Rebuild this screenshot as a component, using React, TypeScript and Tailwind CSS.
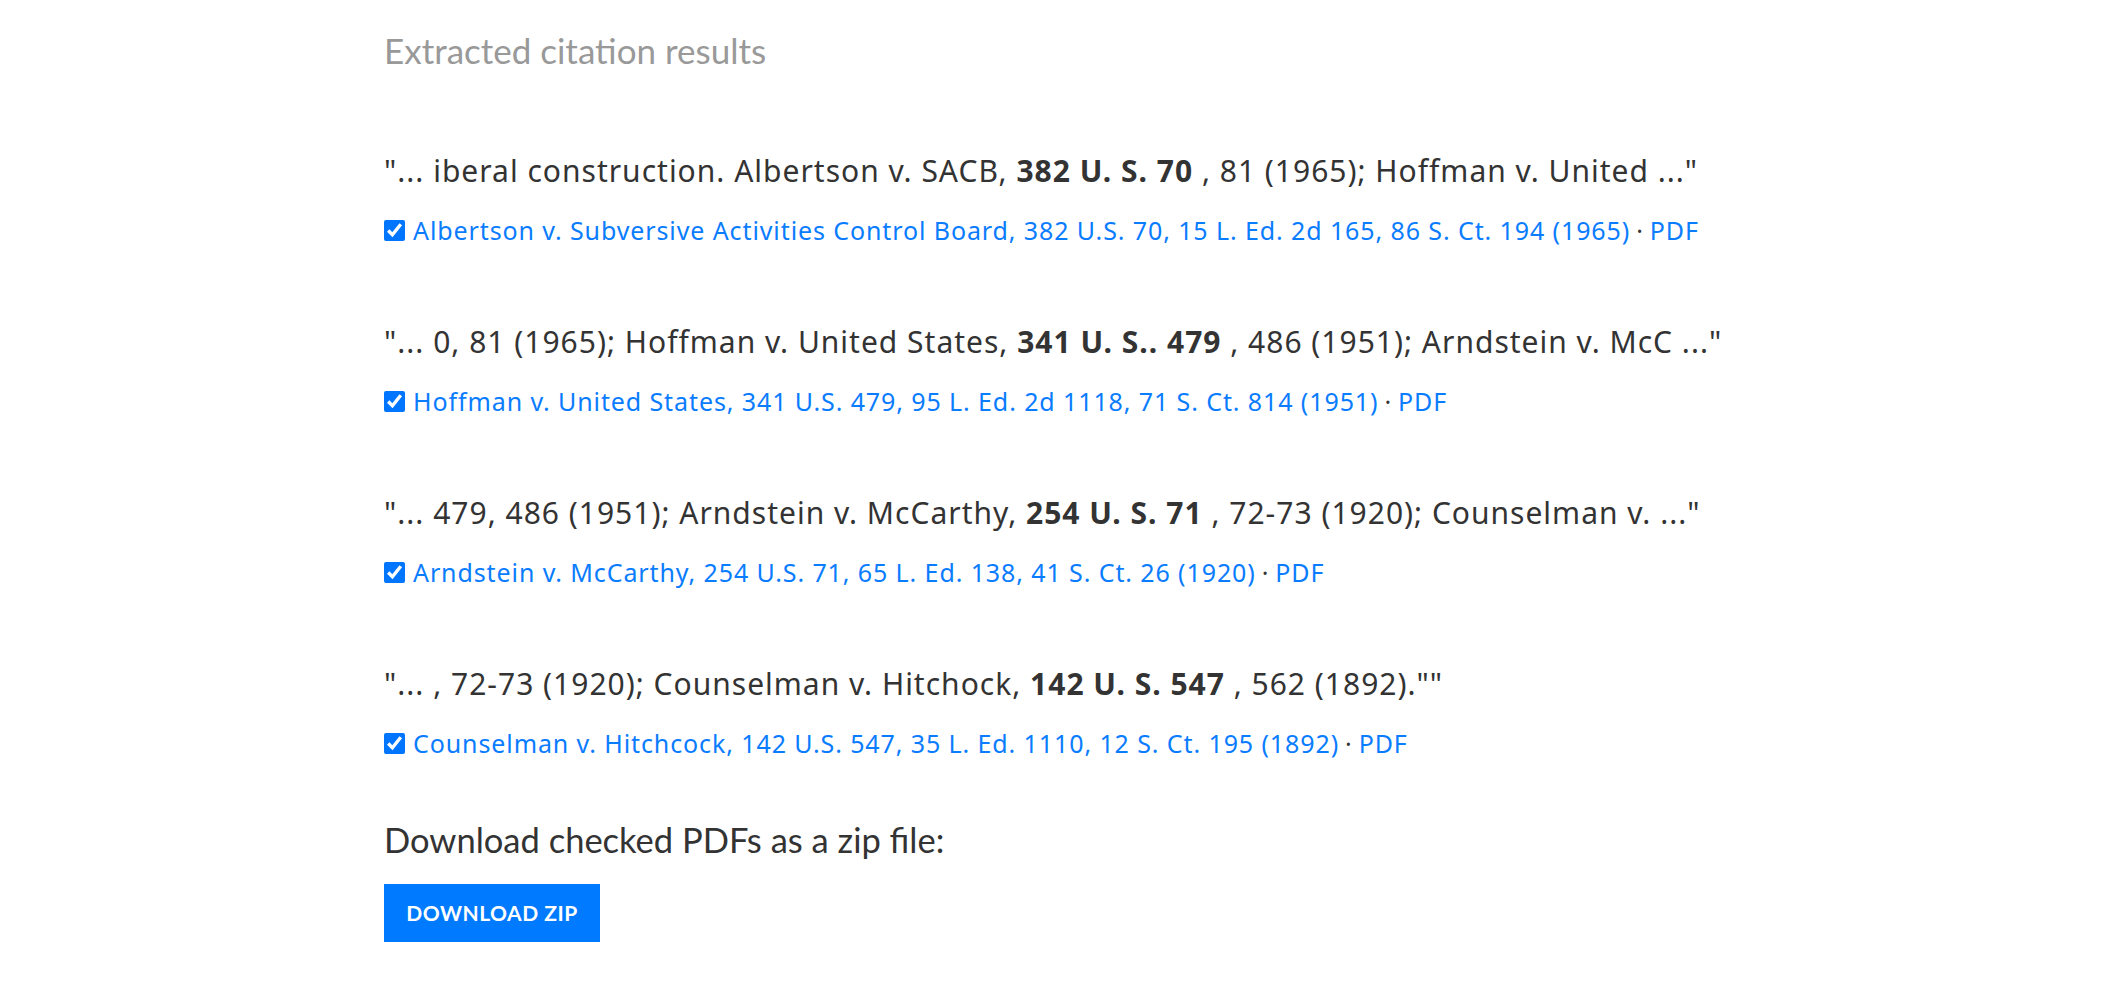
import React from 'react';

type Result = {
  before: string;
  cite: string;
  after: string;
  link: string;
};

const results: Result[] = [
  {
    before: '"... iberal construction. Albertson v. SACB, ',
    cite: '382 U. S. 70',
    after: ' , 81 (1965); Hoffman v. United ..."',
    link: 'Albertson v. Subversive Activities Control Board, 382 U.S. 70, 15 L. Ed. 2d 165, 86 S. Ct. 194 (1965)',
  },
  {
    before: '"... 0, 81 (1965); Hoffman v. United States, ',
    cite: '341 U. S.. 479',
    after: ' , 486 (1951); Arndstein v. McC ..."',
    link: 'Hoffman v. United States, 341 U.S. 479, 95 L. Ed. 2d 1118, 71 S. Ct. 814 (1951)',
  },
  {
    before: '"... 479, 486 (1951); Arndstein v. McCarthy, ',
    cite: '254 U. S. 71',
    after: ' , 72-73 (1920); Counselman v. ..."',
    link: 'Arndstein v. McCarthy, 254 U.S. 71, 65 L. Ed. 138, 41 S. Ct. 26 (1920)',
  },
  {
    before: '"... , 72-73 (1920); Counselman v. Hitchock, ',
    cite: '142 U. S. 547',
    after: ' , 562 (1892).""',
    link: 'Counselman v. Hitchcock, 142 U.S. 547, 35 L. Ed. 1110, 12 S. Ct. 195 (1892)',
  },
];

export default function App() {
  return (
    <div className="min-h-screen bg-white pl-[384px] pt-[30px] font-['Lato','Liberation_Sans',sans-serif]">
      <h2 className="text-[35px] leading-[40px] text-[#999999]">Extracted citation results</h2>

      <div className="mt-[82px] flex flex-col gap-[75px]">
        {results.map((r, i) => (
          <div key={i} className="flex flex-col gap-[22px] font-['Noto_Sans','Liberation_Sans',sans-serif]">
            <p className="text-[30px] leading-[38px] tracking-[1px] text-[#333333]">
              {r.before}
              <b className="font-bold">{r.cite}</b>
              {r.after}
            </p>
            <div className="flex items-center text-[25px] leading-[36px] tracking-[0.9px]">
              <input type="checkbox" defaultChecked className="mr-[8px] h-[21px] w-[21px] accent-[#0075ff]" />
              <a href="#" className="text-[#0a7cff]">{r.link}</a>
              <span className="mx-[6px] text-[#333333]">·</span>
              <a href="#" className="text-[#0a7cff]">PDF</a>
            </div>
          </div>
        ))}
      </div>

      <p className="mt-[59px] text-[34.5px] leading-[40px] text-[#333333]">Download checked PDFs as a zip file:</p>
      <button className="mt-[24px] h-[58px] w-[216px] bg-[#007bff] text-[21px] font-bold tracking-[0.5px] text-white">
        DOWNLOAD ZIP
      </button>
    </div>
  );
}
